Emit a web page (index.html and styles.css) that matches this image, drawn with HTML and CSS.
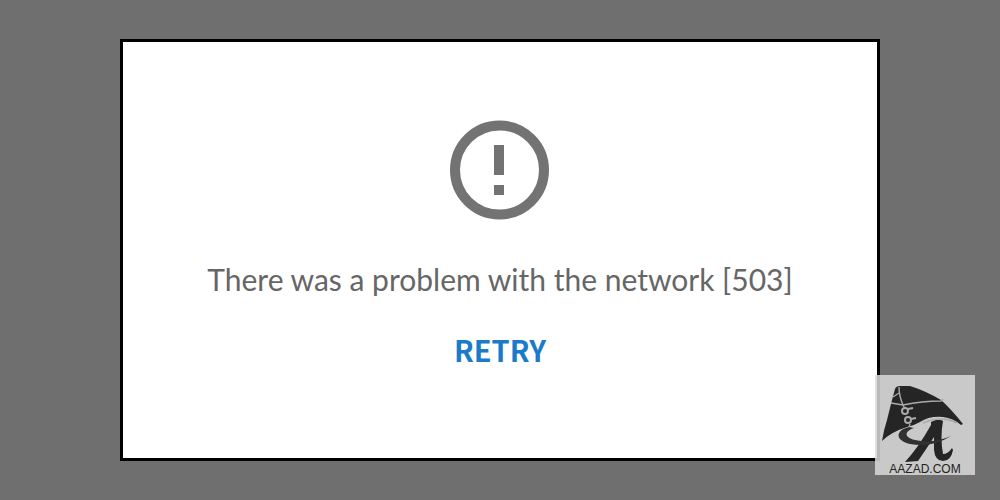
FILE: index.html
```html
<!DOCTYPE html>
<html lang="en">
<head>
    <meta charset="UTF-8">
    <meta name="viewport" content="width=device-width, initial-scale=1.0">
    <title>Network problem</title>
    <link rel="stylesheet" href="styles.css">
</head>
<body>
    <main class="error-box">
        <svg class="error-icon" viewBox="0 0 100 100" aria-hidden="true">
            <circle cx="49.5" cy="50" r="44.5" fill="none" stroke="#737373" stroke-width="10"/>
            <rect x="44" y="25" width="10" height="30" fill="#737373"/>
            <rect x="44" y="65" width="10" height="10" fill="#737373"/>
        </svg>
        <p class="message">There was a problem with the network [503]</p>
        <button type="button" class="retry-button">RETRY</button>
    </main>
    <div class="watermark">
        <svg class="watermark-logo" viewBox="0 0 100 88" aria-hidden="true">
            <!-- letter A under the hat -->
            <path d="M56 47 Q63 43 68 46 Q65 62 68 79 Q73 79 77 73 L78 75 Q76 86 68 86 Q60 86 59 75 L59 62 Q52 73 43 86 L30 87 Q43 73 56 50Z" fill="#252525"/>
            <path d="M34 52 C21 55 19 65 35 69 Q57 73 76 61 Q58 69 40 65 C28 62 30 56 39 53Z" fill="#303030"/>
            <!-- hat -->
            <path d="M20 14 Q21 11 25 11 L35 11 Q51 16 66 25 Q77 35 88 49 L86 50 Q78 43 68 42 Q54 41 45 47 Q38 51 32 52 Q16 57 7 66 Q9 54 12 45 L17 25Z" fill="#252525"/>
            <g fill="none" stroke="#aaaaaa" stroke-width="1.4">
                <path d="M16 28 Q22 29 28 30 Q47 26 66 26 L68 24"/>
                <path d="M24 12 Q24 21 28 30 L30 34"/>
                <path d="M18 22 L24 18"/>
                <path d="M34 52 L35 49"/>
                <path d="M48 48 Q66 40 82 48"/>
                <circle cx="30" cy="36" r="3" stroke-width="2"/>
                <circle cx="33" cy="45" r="3" stroke-width="2"/>
                <path d="M33 34 L38 33 M36 44 L41 43" stroke-width="2"/>
            </g>
        </svg>
        <span class="watermark-text">AAZAD.COM</span>
    </div>
</body>
</html>
```
FILE: styles.css
```css
* {
    box-sizing: border-box;
}
body {
    margin: 0;
    min-height: 100vh;
    padding: 39px 12%;
    display: flex;
    background-color: #6f6f6f;
    font-family: "Noto Sans CJK SC", "Noto Sans", sans-serif;
}
.error-box {
    flex: 1;
    display: flex;
    flex-direction: column;
    align-items: center;
    padding: 78px 20px 40px;
    background-color: #ffffff;
    border: 3px solid #000000;
}
.error-icon {
    width: 100px;
    height: 100px;
}
.message {
    margin: 39px 0 0;
    font-family: Lato, sans-serif;
    font-size: 30px;
    line-height: 40px;
    color: #666666;
    text-align: center;
}
.retry-button {
    margin-top: 30px;
    padding: 0;
    border: none;
    background: none;
    color: #1c7bc9;
    font-family: inherit;
    font-size: 29px;
    font-weight: bold;
    line-height: 40px;
    cursor: pointer;
}
.watermark {
    position: absolute;
    right: 25px;
    bottom: 25px;
    width: 100px;
    height: 100px;
    display: flex;
    flex-direction: column;
    align-items: center;
    background-color: rgba(217, 217, 217, 0.85);
}
.watermark-logo {
    width: 100px;
    height: 88px;
}
.watermark-text {
    font-family: "Liberation Sans", Arial, sans-serif;
    font-size: 12px;
    line-height: 12px;
    color: #222222;
}
```
